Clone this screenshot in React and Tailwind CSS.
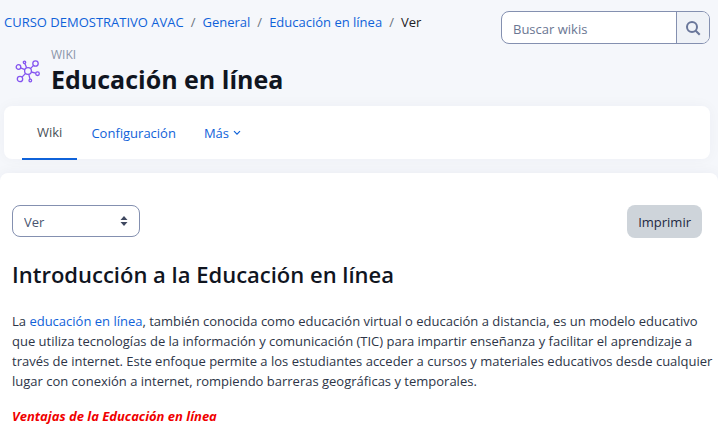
import React, { useState } from 'react';

const breadcrumbs = [
  { label: 'CURSO DEMOSTRATIVO AVAC', href: '#curso' },
  { label: 'General', href: '#general' },
  { label: 'Educación en línea', href: '#wiki' },
];

function WikiIcon() {
  return (
    <svg width="26" height="24" viewBox="0 0 26 24" fill="none" stroke="#8454f0" strokeWidth="1.3" aria-hidden="true">
      <circle cx="13" cy="12" r="3.4" />
      <circle cx="3.5" cy="8" r="2.3" />
      <circle cx="9.5" cy="3.3" r="1.2" />
      <circle cx="20.5" cy="4.5" r="2.7" />
      <circle cx="22.5" cy="14.7" r="1.8" />
      <circle cx="15.3" cy="21.5" r="1.3" />
      <circle cx="5" cy="20" r="2.7" />
      <path d="M5.6 8.9l4.3 1.8M9.9 4.5l1.7 4.3M18.6 6.4l-3.2 3.2M20.7 14.2l-4.4-1.2M15 20.2l-1.2-4.9M7 18.1l3.6-3.7" />
    </svg>
  );
}

function Breadcrumbs() {
  return (
    <nav aria-label="Ruta" className="pt-3">
      <ol className="flex flex-wrap">
        {breadcrumbs.map((item) => (
          <li key={item.href} className="flex">
            <a href={item.href} className="text-[#0f62d9] hover:underline">{item.label}</a>
            <span className="px-[7px] text-[#6a737b]">/</span>
          </li>
        ))}
        <li className="text-[#1d2125]">Ver</li>
      </ol>
    </nav>
  );
}

function SearchBox() {
  const [query, setQuery] = useState('');

  return (
    <form
      role="search"
      onSubmit={(e) => e.preventDefault()}
      className="mt-[11px] flex h-[33px] w-[209px] shrink-0 overflow-hidden rounded-lg border border-[#8490b0] bg-white"
    >
      <input
        type="text"
        aria-label="Buscar wikis"
        placeholder="Buscar wikis"
        value={query}
        onChange={(e) => setQuery(e.target.value)}
        className="min-w-0 flex-1 px-[11px] pt-[2px] outline-none placeholder:text-[#6a7692]"
      />
      <button type="submit" aria-label="Buscar" className="flex w-[33px] items-center justify-center border-l border-[#8490b0] bg-[#eff2f7]">
        <svg width="16" height="16" viewBox="0 0 16 16" fill="none" stroke="#69769a" strokeWidth="2" aria-hidden="true">
          <circle cx="7" cy="7" r="5" />
          <path d="M10.7 10.7l4 4" />
        </svg>
      </button>
    </form>
  );
}

function Tabs() {
  return (
    <nav aria-label="Wiki" className="mr-2 ml-1 mt-[11px] flex h-[53px] rounded-lg bg-white px-[18px] shadow-[0_0_14px_rgba(20,30,80,0.04)]">
      <a href="#wiki" aria-current="page" className="-mb-px flex items-center border-b-2 border-[#0f62d9] px-[15px] text-[#495057]">
        Wiki
      </a>
      <a href="#configuracion" className="flex items-center px-[14px] text-[#0f62d9]">Configuración</a>
      <button type="button" aria-haspopup="menu" className="flex items-center gap-1 px-[14px] text-[#0f62d9]">
        Más
        <svg width="8" height="6" viewBox="0 0 8 6" fill="none" stroke="currentColor" strokeWidth="1.2" aria-hidden="true">
          <path d="M1 1.2l3 3 3-3" />
        </svg>
      </button>
    </nav>
  );
}

function Content() {
  const [view, setView] = useState('ver');

  return (
    <main className="mt-[14px] flex-1 rounded-t-lg bg-white pt-8 pr-1 pl-3 shadow-[0_0_14px_rgba(20,30,80,0.05)]">
      <div className="flex items-start justify-between pr-3">
        <div className="relative">
          <select
            aria-label="Vista"
            value={view}
            onChange={(e) => setView(e.target.value)}
            className="h-8 w-32 appearance-none rounded-lg border border-[#8490b0] bg-white pt-[2px] pl-[11px] text-[#495470]"
          >
            <option value="ver">Ver</option>
            <option value="editar">Editar</option>
            <option value="comentarios">Comentarios</option>
          </select>
          <svg
            width="8"
            height="10"
            viewBox="0 0 8 10"
            fill="#3f4860"
            aria-hidden="true"
            className="pointer-events-none absolute top-[11px] right-3"
          >
            <path d="M4 0l3.5 4h-7zM4 10l3.5-4h-7z" />
          </svg>
        </div>
        <button type="button" className="h-[33px] rounded-lg bg-[#ced4da] px-[11px] pt-px text-[#1d2842]">Imprimir</button>
      </div>

      <h2 className="mt-5 text-[22px] leading-8 font-semibold text-[#10151f]">Introducción a la Educación en línea</h2>

      <p className="mt-[21px] leading-[20px]">
        La <a href="#educacion" className="text-[#0f62d9]">educación en línea</a>, también conocida como educación virtual o
        educación a distancia, es un modelo educativo que utiliza tecnologías de la información y comunicación (TIC) para
        impartir enseñanza y facilitar el aprendizaje a través de internet. Este enfoque permite a los estudiantes acceder a
        cursos y materiales educativos desde cualquier lugar con conexión a internet, rompiendo barreras geográficas y
        temporales.
      </p>
      <p className="mt-[15px] leading-[20px] font-bold text-[#f00000] italic">Ventajas de la Educación en línea</p>
    </main>
  );
}

export default function App() {
  return (
    <div className="flex min-h-screen flex-col overflow-hidden bg-[#f5f7fb] font-['Open_Sans','Noto_Sans',sans-serif] text-[13px] leading-[20px] text-[#2d3548]">
      <header className="flex justify-between pr-2 pl-1">
        <div>
          <Breadcrumbs />
          <div className="mt-[14px] flex items-center gap-[10px] pl-[11px]">
            <WikiIcon />
            <div>
              <div className="text-xs leading-[18px] text-[#8a94a8]">WIKI</div>
              <h1 className="text-[25px] leading-[31px] font-bold text-[#10151f]">Educación en línea</h1>
            </div>
          </div>
        </div>
        <SearchBox />
      </header>
      <Tabs />
      <Content />
    </div>
  );
}
